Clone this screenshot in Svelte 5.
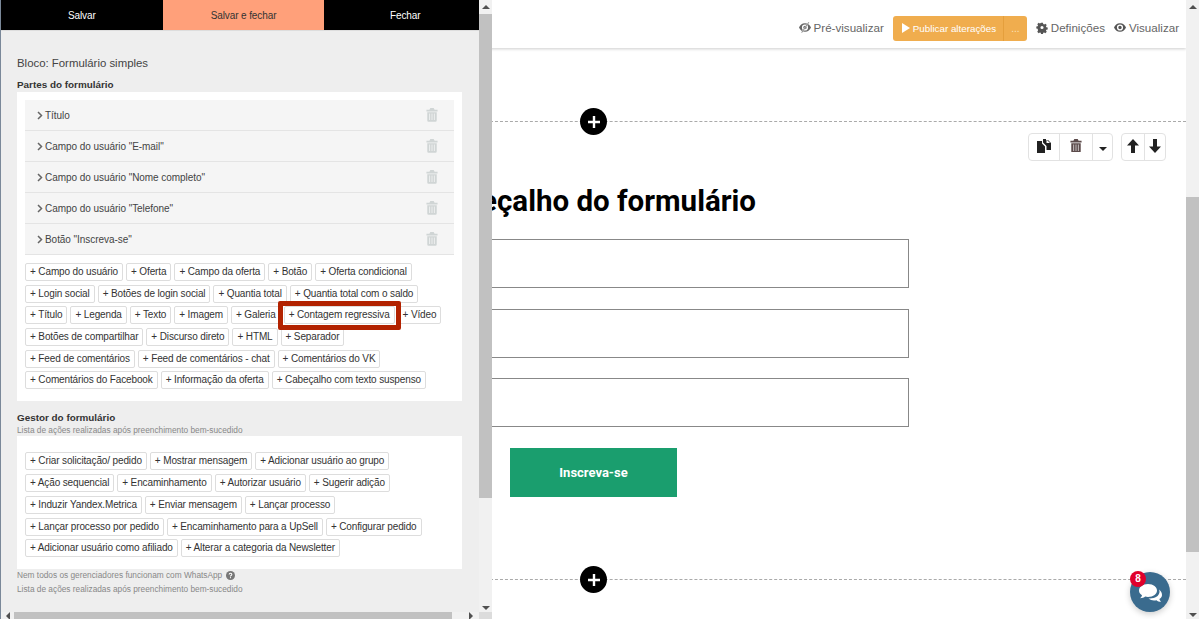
<script>
	const parts = ['Título', 'Campo do usuário "E-mail"', 'Campo do usuário "Nome completo"', 'Campo do usuário "Telefone"', 'Botão "Inscreva-se"'];
	const partChips = [
		'Campo do usuário', 'Oferta', 'Campo da oferta', 'Botão', 'Oferta condicional',
		'Login social', 'Botões de login social', 'Quantia total', 'Quantia total com o saldo',
		'Título', 'Legenda', 'Texto', 'Imagem', 'Galeria', 'Contagem regressiva', 'Vídeo',
		'Botões de compartilhar', 'Discurso direto', 'HTML', 'Separador',
		'Feed de comentários', 'Feed de comentários - chat', 'Comentários do VK',
		'Comentários do Facebook', 'Informação da oferta', 'Cabeçalho com texto suspenso'
	];
	const actionChips = [
		'Criar solicitação/ pedido', 'Mostrar mensagem', 'Adicionar usuário ao grupo',
		'Ação sequencial', 'Encaminhamento', 'Autorizar usuário', 'Sugerir adição',
		'Induzir Yandex.Metrica', 'Enviar mensagem', 'Lançar processo',
		'Lançar processo por pedido', 'Encaminhamento para a UpSell', 'Configurar pedido',
		'Adicionar usuário como afiliado', 'Alterar a categoria da Newsletter'
	];
</script>

{#snippet trash(size)}
	<svg width={size} height={size * 1.15} viewBox="0 0 14 16" fill="currentColor">
		<path d="M5 0h4l1 2h3.500v2H.5V2H4zM1.500 5h11v9.500q0 1.500-1.500 1.500H3q-1.500 0-1.500-1.500z" />
		<path d="M3.800 6.500h1v7.500h-1zM6.500 6.500h1v7.500h-1zM9.200 6.500h1v7.500h-1z" fill="#fff" opacity="0.75" />
	</svg>
{/snippet}

{#snippet plusCircle()}
	<div class="add">
		<svg width="14" height="14" viewBox="0 0 14 14"><path d="M7 1v12M1 7h12" stroke="#fff" stroke-width="2.400" /></svg>
	</div>
{/snippet}

{#snippet eye()}
	<path d="M7 2C3.500 2 1 4.500 0 7c1 2.500 3.500 5 7 5s6-2.500 7-5c-1-2.500-3.500-5-7-5zm0 8.600A3.600 3.600 0 1 1 7 3.400a3.600 3.600 0 0 1 0 7.200zM7 5a2 2 0 1 0 0 4 2 2 0 0 0 0-4z" />
{/snippet}

<div class="app">
	<div class="page">
		<header class="topbar">
			<span class="tool">
				<svg width="12" height="13" viewBox="0 0 14 14" fill="#666">
					{@render eye()}
					<path d="M11 0.500l1 .7L3.500 13.500l-1-.7z" stroke="#fff" stroke-width="0.500" />
				</svg>
				Pré-visualizar
			</span>
			<div class="publish">
				<span class="publish-main"><i class="play"></i>Publicar alterações</span>
				<span class="publish-more">...</span>
			</div>
			<span class="tool">
				<svg width="12" height="13" viewBox="0 0 14 14" fill="#555">
					<path fill-rule="evenodd" d="M5.600 0h2.800l.4 2 1.300.6 1.800-1.100 2 2-1.100 1.800.5 1.300 2 .4v2.800l-2 .4-.5 1.300 1.100 1.800-2 2-1.800-1.100-1.300.5-.4 2H5.600l-.4-2-1.300-.5-1.800 1.100-2-2 1.100-1.800L.7 8.800l-2-.4V5.600l2-.4.500-1.300L.1 2.100l2-2 1.800 1.100 1.300-.6zM7 4.700a2.300 2.300 0 1 0 0 4.600 2.300 2.300 0 0 0 0-4.600z" transform="translate(1.400 1.400) scale(0.8)" />
				</svg>
				Definições
			</span>
			<span class="tool">
				<svg width="12" height="13" viewBox="0 0 14 14" fill="#555">{@render eye()}</svg>
				Visualizar
			</span>
		</header>

		<section class="block">
			<div class="divider first">{@render plusCircle()}</div>

			<div class="block-tools">
				<div class="group">
					<span class="wide">
						<svg width="14" height="14" viewBox="0 0 14 14" fill="#222">
							<path d="M0 2h5v2.500l3 3V14H0z" />
							<path d="M6 0h3v1h2l3 3v7H9.500V7L6 3.500z" />
							<path d="M9.500 .5v3.500H13z" fill="#fff" />
						</svg>
					</span>
					<span class="wide bin">{@render trash(12)}</span>
					<span class="caret-cell"><i class="caret"></i></span>
				</div>
				<div class="group">
					<span class="arrow">
						<svg width="12" height="14" viewBox="0 0 12 14" fill="#222"><path d="M6 0l6 6.500H8V14H4V6.500H0z" /></svg>
					</span>
					<span class="arrow">
						<svg width="12" height="14" viewBox="0 0 12 14" fill="#222"><path d="M6 14l6-6.500H8V0H4v7.500H0z" /></svg>
					</span>
				</div>
			</div>

			<div class="form">
				<h1>Cabeçalho do formulário</h1>
				<div class="input"></div>
				<div class="input"></div>
				<div class="input"></div>
				<button class="submit">Inscreva-se</button>
			</div>

			<div class="divider last">{@render plusCircle()}</div>
		</section>
	</div>

	<div class="page-scroll">
		<i class="up"></i>
		<div class="thumb"></div>
		<i class="down"></i>
	</div>

	<aside class="panel">
		<div class="panel-body">
			<div class="panel-view">
				<div class="tabs">
					<span>Salvar</span>
					<span class="active">Salvar e fechar</span>
					<span>Fechar</span>
				</div>
				<div class="panel-content">
					<h2>Bloco: Formulário simples</h2>
					<h3>Partes do formulário</h3>
					<div class="box parts-box">
						<ul class="parts">
							{#each parts as part}
								<li>
									<svg class="chev" width="6" height="9" viewBox="0 0 6 9"><path d="M1 1l3.500 3.500L1 8" fill="none" stroke="#666" stroke-width="1.500" /></svg>
									<span>{part}</span>
									<span class="part-bin">{@render trash(12)}</span>
								</li>
							{/each}
						</ul>
						<div class="chips">
							{#each partChips as chip}
								<span class="chip" class:marked={chip === 'Contagem regressiva'}>+ {chip}</span>
							{/each}
						</div>
					</div>
					<h3 class="second">Gestor do formulário</h3>
					<p class="hint tight">Lista de ações realizadas após preenchimento bem-sucedido</p>
					<div class="box actions-box">
						<div class="chips">
							{#each actionChips as chip}
								<span class="chip">+ {chip}</span>
							{/each}
						</div>
					</div>
					<p class="hint note">
						Nem todos os gerenciadores funcionam com WhatsApp
						<svg width="9" height="9" viewBox="0 0 10 10"><circle cx="5" cy="5" r="5" fill="#777" /><path d="M3.500 4Q3.500 2.500 5 2.500T6.500 4Q6.500 4.800 5 5.500V6" fill="none" stroke="#fff" stroke-width="1.200" /><rect x="4.400" y="6.800" width="1.200" height="1.200" fill="#fff" /></svg>
					</p>
					<p class="hint">Lista de ações realizadas após preenchimento bem-sucedido</p>
				</div>
			</div>
			<div class="panel-vscroll">
				<i class="up"></i>
				<div class="thumb"></div>
				<i class="down"></i>
			</div>
		</div>
		<div class="panel-hscroll">
			<i class="left"></i>
			<div class="hthumb"></div>
			<i class="right"></i>
			<div class="corner"></div>
		</div>
	</aside>

	<div class="chat">
		<svg width="26" height="22" viewBox="0 0 26 22" fill="#fff">
			<path d="M10 1C4.500 1 1 4 1 7.500c0 2 1.200 3.700 3 4.800-.2 1.200-1 2.200-1.800 3 2 0 3.800-.7 5-1.700.9.200 1.800.3 2.800.3 5.500 0 9-2.900 9-6.400S15.500 1 10 1z" />
			<path d="M21 6.500c.5 1 .6 1.800.5 2.800-.5 3.800-4.500 6.200-9.500 6.200h-1.500c1.500 1.300 3.500 2 5.500 2 .9 0 1.700-.1 2.500-.3 1.100.9 2.700 1.600 4.500 1.600-.7-.7-1.400-1.700-1.600-2.700 1.600-1 2.600-2.500 2.600-4.100 0-2.200-1-4-3-5.500z" />
		</svg>
		<span class="badge">8</span>
	</div>
</div>

<style>
	:global(body) {
		margin: 0;
		font-family: 'Liberation Sans', Arial, sans-serif;
	}

	.app {
		position: relative;
		display: flex;
		width: 1199px;
		height: 619px;
		overflow: hidden;
		background: #fff;
	}

	.page {
		flex: 1;
		min-width: 0;
		display: flex;
		flex-direction: column;
	}

	.topbar {
		height: 48px;
		flex: none;
		display: flex;
		justify-content: flex-end;
		align-items: center;
		padding: 7px 7px 0 0;
		box-sizing: border-box;
		box-shadow: 0 1px 3px rgba(0, 0, 0, 0.2);
		color: #666;
		font-size: 11.600px;
	}

	.tool {
		display: flex;
		align-items: center;
		gap: 3px;
		margin-left: 9px;
	}

	.publish {
		display: flex;
		height: 25px;
		margin: 1px 0 0 9px;
		background: #f0ad4e;
		border-radius: 3px;
		color: #fff;
		font-size: 9.800px;
		line-height: 25px;
	}

	.publish-main {
		display: flex;
		align-items: center;
		box-sizing: border-box;
		padding-left: 9px;
		width: 111px;
		border-right: 1px solid #e59f3c;
		white-space: nowrap;
	}

	.play {
		border-left: 8px solid #fff;
		border-top: 5px solid transparent;
		border-bottom: 5px solid transparent;
		margin-right: 3px;
		flex: none;
	}

	.publish-more {
		width: 23px;
		text-align: center;
		font-size: 10px;
		color: #fbe3bd;
	}

	.block {
		position: relative;
		flex: 1;
	}

	.divider {
		position: absolute;
		left: 490px;
		right: 0;
		border-top: 1px dashed #aaa;
	}

	.divider.first {
		top: 73px;
	}

	.divider.last {
		top: 531px;
	}

	.add {
		position: absolute;
		left: 90px;
		top: -14px;
		width: 27px;
		height: 27px;
		border-radius: 50%;
		background: #000;
		display: flex;
		align-items: center;
		justify-content: center;
	}

	.block-tools {
		position: absolute;
		top: 85px;
		right: 20px;
		display: flex;
		gap: 8px;
	}

	.group {
		display: flex;
		height: 28px;
		border: 1px solid #e2e2e2;
		border-radius: 4px;
		box-sizing: border-box;
	}

	.group span {
		display: flex;
		align-items: center;
		justify-content: center;
		box-sizing: border-box;
		padding-bottom: 3px;
	}

	.group span + span {
		border-left: 1px solid #e2e2e2;
	}

	.wide {
		width: 30px;
	}

	.wide.bin {
		width: 33px;
		color: #5b4a4a;
	}

	.caret-cell {
		width: 20px;
	}

	.caret {
		border-top: 4px solid #222;
		border-left: 4px solid transparent;
		border-right: 4px solid transparent;
		margin-top: 6px;
	}

	.arrow {
		width: 21.500px;
	}

	.form {
		padding: 136px 0 0 400px;
		width: 509px;
	}

	h1 {
		margin: 0 0 21px;
		font: 700 29.500px/34px Roboto, sans-serif;
		color: #000;
		white-space: nowrap;
		width: 356px;
		text-align: right;
	}

	.input {
		height: 49px;
		box-sizing: border-box;
		border: 1px solid #888;
		margin-bottom: 20.500px;
		background: #fff;
	}

	.submit {
		display: block;
		margin: 0 0 0 110px;
		width: 167px;
		height: 49px;
		border: 0;
		background: #1a9e6e;
		color: #fff;
		font: 700 13px Roboto, sans-serif;
	}

	.page-scroll {
		position: relative;
		width: 13px;
		flex: none;
		background: #f1f1f1;
		display: flex;
		flex-direction: column;
	}

	.page-scroll .thumb {
		margin-top: 197px;
		height: 355px;
		background: #c1c1c1;
	}

	.up,
	.down {
		display: block;
		position: absolute;
		left: 3px;
		border-left: 4px solid transparent;
		border-right: 4px solid transparent;
	}

	.up {
		top: 5px;
		border-bottom: 4px solid #505050;
	}

	.down {
		bottom: 2px;
		border-top: 4px solid #505050;
	}

	.panel {
		position: absolute;
		left: 0;
		top: 0;
		width: 492px;
		height: 619px;
		box-sizing: border-box;
		border-left: 1px solid #7a8899;
		display: flex;
		flex-direction: column;
		background: #eee;
		color: #444;
	}

	.panel-body {
		flex: 1;
		min-height: 0;
		display: flex;
	}

	.panel-view {
		flex: 1;
		min-width: 0;
		overflow: hidden;
	}

	.tabs {
		display: flex;
		width: 485px;
		height: 30px;
		background: #000;
		color: #fff;
		font-size: 10px;
		letter-spacing: -0.100px;
		border-bottom: 1px solid #ddd;
		box-sizing: content-box;
	}

	.tabs span {
		flex: 1;
		display: flex;
		align-items: center;
		justify-content: center;
	}

	.tabs .active {
		background: #ffa07a;
		color: #333;
	}

	.panel-content {
		padding: 25px 16px 0;
		width: 445px;
	}

	h2 {
		margin: 0 0 8px;
		font-size: 11.400px;
		line-height: 14px;
		font-weight: 400;
		color: #444;
	}

	h3 {
		margin: 0;
		font-size: 9.900px;
		line-height: 14px;
		font-weight: 700;
		color: #333;
	}

	h3.second {
		margin-top: 10px;
	}

	.box {
		background: #fff;
		padding: 8px;
	}

	.parts-box {
		padding-bottom: 12px;
	}

	.actions-box {
		padding: 16px 8px 12px;
	}

	.parts {
		list-style: none;
		margin: 0 0 8px;
		padding: 0;
	}

	.parts li {
		display: flex;
		align-items: center;
		height: 31px;
		box-sizing: border-box;
		padding: 0 16px 0 12px;
		background: #f5f5f5;
		border-bottom: 1px solid #e4e4e4;
		font-size: 10px;
		letter-spacing: -0.050px;
		color: #444;
	}

	.chev {
		margin-right: 2px;
		flex: none;
	}

	.part-bin {
		margin-left: auto;
		color: #d0d5d5;
		display: flex;
	}

	.chips {
		display: flex;
		flex-wrap: wrap;
		gap: 3.700px 3px;
	}

	.chip {
		position: relative;
		display: block;
		height: 18px;
		box-sizing: border-box;
		padding: 0 4px;
		border: 1px solid #ddd;
		border-radius: 2px;
		font-size: 10px;
		letter-spacing: -0.130px;
		line-height: 16px;
		color: #333;
		background: #fff;
		white-space: nowrap;
	}

	.chip.marked {
		z-index: 1;
	}

	.chip.marked::after {
		content: '';
		position: absolute;
		inset: -6px -7px -7px -7px;
		border: 5px solid #b22200;
		border-radius: 2px;
	}

	.hint {
		margin: 0;
		font-size: 8.300px;
		line-height: 14px;
		color: #888;
	}

	.hint.tight {
		line-height: 11px;
	}

	.hint.note {
		display: flex;
		align-items: center;
		gap: 4px;
		height: 12.500px;
	}

	.panel-vscroll {
		position: relative;
		width: 13px;
		flex: none;
		background: #f1f1f1;
	}

	.panel-vscroll .thumb {
		margin-top: 14px;
		height: 484px;
		background: #c1c1c1;
	}

	.panel-hscroll {
		position: relative;
		height: 7px;
		flex: none;
		background: #f1f1f1;
		padding-left: 13px;
	}

	.hthumb {
		width: 438px;
		height: 7px;
		background: #c1c1c1;
	}

	.left,
	.right {
		position: absolute;
		top: 0;
		border-top: 4px solid transparent;
		border-bottom: 4px solid transparent;
	}

	.left {
		left: 5px;
		border-right: 4px solid #505050;
	}

	.right {
		left: 468px;
		border-left: 4px solid #505050;
	}

	.corner {
		position: absolute;
		right: 0;
		top: 0;
		width: 13px;
		height: 7px;
		background: #dcdcdc;
	}

	.chat {
		position: absolute;
		left: 1130px;
		top: 572px;
		width: 40px;
		height: 40px;
		border-radius: 50%;
		background: #3a6b8e;
		box-shadow: 0 2px 6px rgba(0, 0, 0, 0.2);
		display: flex;
		align-items: center;
		justify-content: center;
	}

	.chat svg {
		margin: 4px 0 0 2px;
	}

	.badge {
		position: absolute;
		left: 0;
		top: -1px;
		width: 16px;
		height: 16px;
		border-radius: 50%;
		background: #e0002b;
		color: #fff;
		font-size: 10px;
		font-weight: 700;
		line-height: 16px;
		text-align: center;
	}
</style>
